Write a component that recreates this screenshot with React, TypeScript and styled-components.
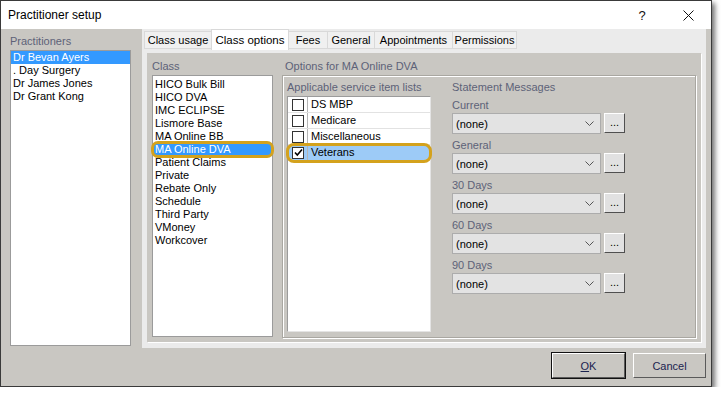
import styled, { createGlobalStyle } from "styled-components";

const GlobalStyle = createGlobalStyle`
  html, body {
    margin: 0;
    padding: 0;
    background: #ffffff;
  }
  body {
    font-family: "Liberation Sans", Arial, sans-serif;
    font-size: 11px;
    color: #000;
  }
`;

const PRACTITIONERS = ["Dr Bevan Ayers", ". Day Surgery", "Dr James Jones", "Dr Grant Kong"];

const CLASSES = [
  "HICO Bulk Bill",
  "HICO DVA",
  "IMC ECLIPSE",
  "Lismore Base",
  "MA Online BB",
  "MA Online DVA",
  "Patient Claims",
  "Private",
  "Rebate Only",
  "Schedule",
  "Third Party",
  "VMoney",
  "Workcover",
];

const TABS = [
  { label: "Class usage", width: 68 },
  { label: "Class options", width: 78 },
  { label: "Fees", width: 40 },
  { label: "General", width: 48 },
  { label: "Appointments", width: 79 },
  { label: "Permissions", width: 65 },
];

const SERVICE_LISTS = [
  { name: "DS MBP", checked: false },
  { name: "Medicare", checked: false },
  { name: "Miscellaneous", checked: false },
  { name: "Veterans", checked: true },
];

const MESSAGES = ["Current", "General", "30 Days", "60 Days", "90 Days"];

function App() {
  return (
    <>
      <GlobalStyle />
      <Window>
        <TitleBar>
          <Title>Practitioner setup</Title>
          <TitleButtons>
            <HelpButton>?</HelpButton>
            <CloseButton>
              <svg width="11" height="11" viewBox="0 0 11 11">
                <path d="M0.5 0.5 L10.5 10.5 M10.5 0.5 L0.5 10.5" stroke="#111" strokeWidth="1" />
              </svg>
            </CloseButton>
          </TitleButtons>
        </TitleBar>
        <Body>
          <MainRow>
            <LeftPane>
              <FieldLabel>Practitioners</FieldLabel>
              <ListBox $height={296}>
                {PRACTITIONERS.map((p, i) => (
                  <ListItem key={p} $selected={i === 0}>
                    {p}
                  </ListItem>
                ))}
              </ListBox>
            </LeftPane>
            <TabControl>
              <TabStrip>
                {TABS.map((t) => (
                  <Tab key={t.label} $active={t.label === "Class options"} $width={t.width}>
                    {t.label}
                  </Tab>
                ))}
              </TabStrip>
              <TabPage>
                <ClassColumn>
                  <FieldLabel>Class</FieldLabel>
                  <ListBox $height={262} $padTop={2}>
                    {CLASSES.map((c) => (
                      <ListItem key={c} $selected={c === "MA Online DVA"} $marked={c === "MA Online DVA"}>
                        {c}
                      </ListItem>
                    ))}
                  </ListBox>
                </ClassColumn>
                <OptionsColumn>
                  <GroupLabel>Options for MA Online DVA</GroupLabel>
                  <GroupBox>
                    <ServiceColumn>
                      <FieldLabel>Applicable service item lists</FieldLabel>
                      <CheckList>
                        {SERVICE_LISTS.map((s) => (
                          <CheckRow key={s.name} $selected={s.checked}>
                            <CheckCell>
                              <CheckBox>
                                {s.checked && (
                                  <svg width="9" height="9" viewBox="0 0 9 9">
                                    <path d="M1 4.5 L3.3 7 L8 1.5" stroke="#000" strokeWidth="1.6" fill="none" />
                                  </svg>
                                )}
                              </CheckBox>
                            </CheckCell>
                            <CheckText>{s.name}</CheckText>
                          </CheckRow>
                        ))}
                      </CheckList>
                    </ServiceColumn>
                    <StatementColumn>
                      <FieldLabel>Statement Messages</FieldLabel>
                      {MESSAGES.map((m) => (
                        <MessageBlock key={m}>
                          <FieldLabel>{m}</FieldLabel>
                          <ComboRow>
                            <Combo>
                              <span>(none)</span>
                              <svg width="9" height="5" viewBox="0 0 9 5">
                                <path d="M0.5 0.5 L4.5 4.5 L8.5 0.5" stroke="#555" strokeWidth="1" fill="none" />
                              </svg>
                            </Combo>
                            <DotsButton>...</DotsButton>
                          </ComboRow>
                        </MessageBlock>
                      ))}
                    </StatementColumn>
                  </GroupBox>
                </OptionsColumn>
              </TabPage>
            </TabControl>
          </MainRow>
          <Footer>
            <DialogButton $default>
              <u>O</u>K
            </DialogButton>
            <DialogButton>Cancel</DialogButton>
          </Footer>
        </Body>
      </Window>
    </>
  );
}

export default App;

const Window = styled.div`
  width: 712px;
  height: 387px;
  box-sizing: border-box;
  border: 1px solid #3a3a3a;
  background: #c9c7c2;
  display: flex;
  flex-direction: column;
  box-shadow: 3px 3px 5px rgba(0, 0, 0, 0.55);
`;

const TitleBar = styled.div`
  height: 28px;
  background: #ffffff;
  display: flex;
  align-items: center;
  justify-content: space-between;
  padding: 0 0 0 7px;
`;

const Title = styled.div`
  font-size: 12px;
  color: #000;
`;

const TitleButtons = styled.div`
  display: flex;
  align-items: center;
  height: 100%;
`;

const HelpButton = styled.div`
  width: 46px;
  text-align: center;
  font-size: 13px;
  color: #111;
`;

const CloseButton = styled.div`
  width: 46px;
  height: 100%;
  display: flex;
  align-items: center;
  justify-content: center;
`;

const Body = styled.div`
  flex: 1;
  display: flex;
  flex-direction: column;
  padding: 0 4px 8px 9px;
`;

const MainRow = styled.div`
  display: flex;
  gap: 11px;
  height: 319px;
`;

const LeftPane = styled.div`
  width: 121px;
  padding-top: 5px;
  display: flex;
  flex-direction: column;
`;

const FieldLabel = styled.div`
  line-height: 14px;
  height: 14px;
  margin-bottom: 2px;
  color: #5d6278;
  white-space: nowrap;
`;

const ListBox = styled.div<{ $height: number; $padTop?: number }>`
  height: ${(p) => p.$height}px;
  box-sizing: border-box;
  background: #ffffff;
  border: 1px solid #9b9b9b;
  padding: ${(p) => p.$padTop ?? 0}px 0 0 0;
`;

const ListItem = styled.div<{ $selected?: boolean; $marked?: boolean }>`
  height: 13px;
  line-height: 13px;
  padding-left: 2px;
  white-space: nowrap;
  background: ${(p) => (p.$selected ? "#3399ff" : "transparent")};
  color: ${(p) => (p.$selected ? "#ffffff" : "#000000")};
  border-radius: ${(p) => (p.$marked ? "5px" : "0")};
  outline: ${(p) => (p.$marked ? "3px solid #d4a21d" : "none")};
  outline-offset: -1px;
`;

const TabControl = styled.div`
  width: 564px;
  background: #ebebeb;
  display: flex;
  flex-direction: column;
`;

const TabStrip = styled.div`
  height: 20px;
  display: flex;
  align-items: flex-end;
  padding-left: 2px;
`;

const Tab = styled.div<{ $active?: boolean; $width: number }>`
  box-sizing: border-box;
  width: ${(p) => p.$width}px;
  height: ${(p) => (p.$active ? "21px" : "18px")};
  margin-bottom: ${(p) => (p.$active ? "-1px" : "0")};
  background: ${(p) => (p.$active ? "#ffffff" : "#f0f0f0")};
  border: 1px solid #d9d9d9;
  border-bottom: ${(p) => (p.$active ? "none" : "1px solid #d9d9d9")};
  margin-right: -1px;
  display: flex;
  align-items: center;
  justify-content: center;
  font-size: ${(p) => (p.$active ? "11.5px" : "11px")};
  white-space: nowrap;
  position: relative;
  z-index: ${(p) => (p.$active ? 1 : 0)};
`;

const TabPage = styled.div`
  flex: 1;
  margin: 4px 5px 6px 5px;
  background: #c9c7c2;
  box-shadow: 1px 1px 0 #ffffff;
  display: flex;
  padding: 6px 0 0 5px;
`;

const ClassColumn = styled.div`
  width: 121px;
  display: flex;
  flex-direction: column;
`;

const OptionsColumn = styled.div`
  width: 414px;
  margin-left: 9px;
  display: flex;
  flex-direction: column;
`;

const GroupLabel = styled(FieldLabel)`
  padding-left: 3px;
`;

const GroupBox = styled.div`
  height: 263px;
  box-sizing: border-box;
  border: 1px solid #a9a7a1;
  box-shadow: 1px 1px 0 #ffffff, inset 1px 1px 0 #ffffff;
  padding: 4px 4px 5px 4px;
  display: flex;
`;

const ServiceColumn = styled.div`
  width: 144px;
  display: flex;
  flex-direction: column;
`;

const CheckList = styled.div`
  height: 236px;
  box-sizing: border-box;
  background: #ffffff;
  border: 1px solid #9b9b9b;
  border-bottom-color: #e4e4e4;
  border-right-color: #e4e4e4;
`;

const CheckRow = styled.div<{ $selected?: boolean }>`
  height: 16px;
  display: flex;
  border-bottom: 1px solid #e2e2e2;
  box-sizing: border-box;
  background: ${(p) => (p.$selected ? "#9dcbf7" : "transparent")};
  border-radius: ${(p) => (p.$selected ? "6px" : "0")};
  outline: ${(p) => (p.$selected ? "3px solid #d4a21d" : "none")};
  outline-offset: -1px;
`;

const CheckCell = styled.div`
  width: 20px;
  border-right: 1px solid #b5b5b5;
  display: flex;
  align-items: center;
  padding-left: 4px;
  box-sizing: border-box;
`;

const CheckBox = styled.div`
  width: 12px;
  height: 12px;
  box-sizing: border-box;
  border: 1px solid #333;
  background: #fff;
  display: flex;
  align-items: center;
  justify-content: center;
`;

const CheckText = styled.div`
  padding-left: 3px;
  line-height: 15px;
`;

const StatementColumn = styled.div`
  margin-left: 21px;
  display: flex;
  flex-direction: column;
`;

const MessageBlock = styled.div`
  margin-top: 2px;
  margin-bottom: 2px;
  & > ${FieldLabel} {
    margin-bottom: 1px;
  }
`;

const ComboRow = styled.div`
  display: flex;
  gap: 3px;
  align-items: flex-start;
`;

const Combo = styled.div`
  width: 149px;
  height: 21px;
  box-sizing: border-box;
  background: #e3e3e3;
  border: 1px solid #acacac;
  display: flex;
  align-items: center;
  justify-content: space-between;
  padding: 0 6px 0 3px;
`;

const DotsButton = styled.div`
  width: 21px;
  height: 20px;
  box-sizing: border-box;
  background: #e1e1e1;
  border: 1px solid;
  border-color: #ffffff #505050 #505050 #ffffff;
  display: flex;
  align-items: flex-end;
  justify-content: center;
  padding-bottom: 5px;
  line-height: 10px;
`;

const Footer = styled.div`
  flex: 1;
  display: flex;
  justify-content: flex-end;
  align-items: flex-start;
  gap: 8px;
  padding: 5px 1px 0 0;
`;

const DialogButton = styled.div<{ $default?: boolean }>`
  width: 73px;
  height: 25px;
  box-sizing: border-box;
  background: #c9c7c2;
  border: 1px solid;
  border-color: #ffffff #5a5a5a #5a5a5a #ffffff;
  outline: ${(p) => (p.$default ? "1px solid #111" : "none")};
  display: flex;
  align-items: center;
  justify-content: center;
  color: #1b2450;
`;
